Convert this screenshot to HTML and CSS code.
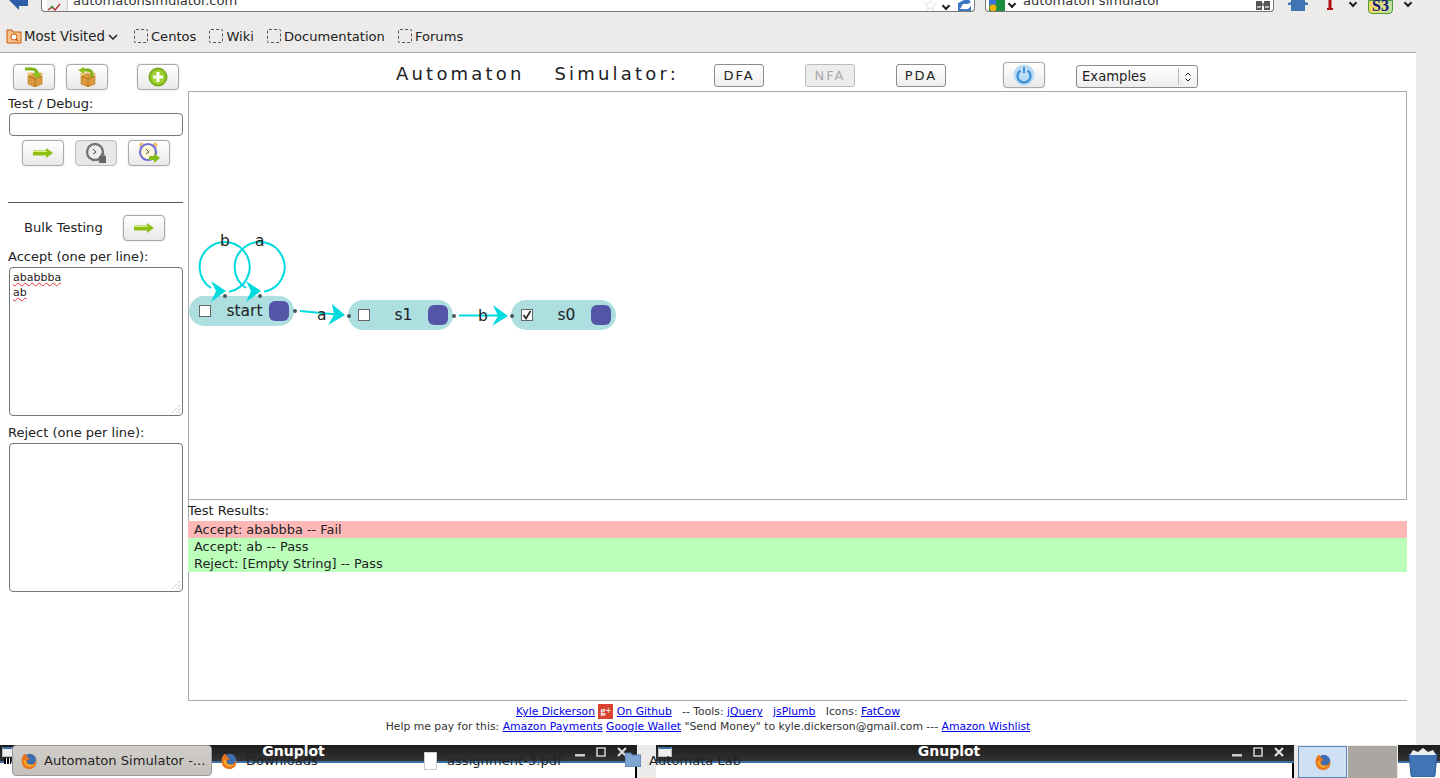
FILE: index.html
```html
<!DOCTYPE html>
<html lang="en">

<head>
    <meta charset="UTF-8">
    <title>Automaton Simulator</title>
    <link rel="stylesheet" href="styles.css">
</head>

<body>
    <svg class="defs" width="0" height="0">
        <symbol id="i-arrow" viewBox="0 0 20 10">
            <path d="M0 2.500h13V0l7 5-7 5V7.500H0z" fill="#8fbf14"/>
            <path d="M0 3.500h14" stroke="#d9ef7c" stroke-width="1"/>
        </symbol>
        <symbol id="i-box" viewBox="0 0 20 20">
            <path d="M4 9l7-3 7 3v8l-7 3-7-3z" fill="#dc9a3e" stroke="#b8791f" stroke-width=".6"/>
            <path d="M4 9l7 3 7-3M11 12v8" fill="none" stroke="#a96c18" stroke-width=".8"/>
            <path d="M4 9L2.500 6.500 7 5l4 1zM18 9l1.500-2.500L15 5l-4 1z" fill="#f4c884"/>
        </symbol>
        <symbol id="i-firefox" viewBox="0 0 20 20">
            <circle cx="11" cy="9" r="7" fill="#3d6db0"/>
            <path d="M5 2C1 6 1 11 3 15c2 4 8 5 11 3 3-1 5-5 4-9-1 3-3 5-6 5-3 0-5-2-4-5l3-1C9 6 7 5 7 3z" fill="#e8761c"/>
            <path d="M4 9c0 4 3 8 8 7 2 0 4-2 5-4-2 2-4 3-6 2-3 0-5-2-5-5z" fill="#f6b02a"/>
        </symbol>
        <symbol id="i-min" viewBox="0 0 10 10"><path d="M0 7h10v2.500H0z" fill="#ccc"/></symbol>
        <symbol id="i-max" viewBox="0 0 10 10"><path d="M1 1h8v8H1z" fill="none" stroke="#ccc" stroke-width="1.600"/></symbol>
        <symbol id="i-close" viewBox="0 0 10 10"><path d="M1 1l8 8M9 1l-8 8" stroke="#ddd" stroke-width="2.200"/></symbol>
        <symbol id="i-grip" viewBox="0 0 11 11"><path d="M10 2l-8 8M10 6l-4 4M10 9l-1 1" stroke="#aaa" stroke-dasharray="1 1"/></symbol>
    </svg>

    <header class="chrome">
        <div class="navbar">
            <svg class="back" width="20" height="11" viewBox="0 0 20 11"><path d="M0 0l10 10V6h9V0z" fill="#2c5fa8"/></svg>
            <div class="urlbox">
                <span class="favicon"><svg width="15" height="9" viewBox="0 0 15 9"><path d="M1 7l4-3 3 3 5-6" fill="none" stroke="#b03030" stroke-width="1.400"/><circle cx="5" cy="4" r="1.300" fill="#2a9a3a"/></svg></span>
                <span class="urltext">automatonsimulator.com</span>
                <span class="urlicons"><span class="star">☆</span><span class="chev"></span><svg class="reload" width="14" height="11" viewBox="0 0 14 11"><path d="M1 3l6-3h5l2 2-3 2H6L3 9h8l3-3v5H1z" fill="#3f78c4"/></svg></span>
            </div>
            <div class="searchbox">
                <svg class="goog" width="16" height="11" viewBox="0 0 16 11"><rect width="16" height="11" fill="#1a8f3c"/><rect width="7" height="5" fill="#3c76d8"/><circle cx="4" cy="8" r="3.400" fill="#f4b400"/></svg>
                <span class="chev"></span>
                <span class="urltext">automaton simulator</span>
                <svg class="binoc" width="16" height="11" viewBox="0 0 16 11"><path d="M1 1h6v9H1zM9 1h6v9H9z" fill="#555"/><path d="M7 3h2v3H7z" fill="#888"/><path d="M2 6h4v2H2zM10 6h4v2h-4z" fill="#bbb"/></svg>
            </div>
            <div class="addons">
                <svg width="20" height="11" viewBox="0 0 20 11"><path d="M3 0h14v2l3 1v2h-3v6H3V5H0V3l3-1z" fill="#3f74b5"/></svg>
                <svg class="addon-t" width="6" height="10" viewBox="0 0 6 10"><path d="M1.500 0h3v8H6v2H0V8h1.500z" fill="#b01010"/></svg>
                <span class="chev"></span>
                <span class="s3">S3</span>
                <span class="chev"></span>
            </div>
        </div>
        <nav class="bookmarks">
            <svg width="16" height="16" viewBox="0 0 16 16"><path d="M1 2h5l1 2h8v11H1z" fill="#f7c08a" stroke="#cc5a0a"/><circle cx="8" cy="9" r="3" fill="#fff" stroke="#cc5a0a"/><path d="M10 11l2 2" stroke="#cc5a0a" stroke-width="1.400"/></svg>
            <span class="bm-most">Most Visited</span>
            <svg class="bm-caret" width="10" height="6" viewBox="0 0 10 6"><path d="M1 1l4 4 4-4" fill="none" stroke="#222" stroke-width="1.500"/></svg>
            <a class="bm"><i></i>Centos</a>
            <a class="bm"><i></i>Wiki</a>
            <a class="bm"><i></i>Documentation</a>
            <a class="bm"><i></i>Forums</a>
        </nav>
    </header>

    <div class="viewport">
        <main class="page">
            <aside class="sidebar">
                <div class="btn-row top-row">
                    <button class="btn">
                        <svg width="20" height="20" viewBox="0 0 20 20"><use href="#i-box"/><path d="M1 2h7q5 0 5 5" fill="none" stroke="#7fb51a" stroke-width="3"/><path d="M8.500 6h9L13 12z" fill="#8fc31f"/></svg>
                    </button>
                    <button class="btn">
                        <svg width="20" height="20" viewBox="0 0 20 20"><use href="#i-box"/><path d="M15 10V7q0-4-5-4H7" fill="none" stroke="#7fb51a" stroke-width="3"/><path d="M7 0v7L1 3z" fill="#8fc31f"/></svg>
                    </button>
                    <button class="btn btn-add">
                        <svg width="20" height="20" viewBox="0 0 20 20"><circle cx="10" cy="10" r="9" fill="#86bc1e" stroke="#6b9c10"/><circle cx="10" cy="10" r="7" fill="#9ed030"/><path d="M8.500 5h3v3.500H15v3h-3.500V15h-3v-3.500H5v-3h3.500z" fill="#fff"/></svg>
                    </button>
                </div>
                <label class="side-label debug-label" for="debug">Test / Debug:</label>
                <input class="debug-input" id="debug" type="text">
                <div class="btn-row debug-row">
                    <button class="btn"><svg width="20" height="10"><use href="#i-arrow"/></svg></button>
                    <button class="btn btn-off">
                        <svg width="22" height="22" viewBox="0 0 22 22"><circle cx="10" cy="10" r="8" fill="#eee" stroke="#777" stroke-width="2.400"/><path d="M8 7l3 3-3 2" fill="none" stroke="#444"/><path d="M14 14h7v7h-7z" fill="#666"/><path d="M16 14v-2h3v2" fill="none" stroke="#666"/></svg>
                    </button>
                    <button class="btn">
                        <svg width="22" height="22" viewBox="0 0 22 22"><circle cx="3.500" cy="3" r="2.500" fill="#f2c274"/><circle cx="17" cy="3" r="2.500" fill="#f2c274"/><circle cx="10" cy="10" r="8" fill="#fff8d8" stroke="#7070d8" stroke-width="2.200"/><path d="M8 7l3 3-3 2" fill="none" stroke="#444"/><path d="M11 14h5v-3l6 5-6 5v-3h-5z" fill="#86bc1e"/></svg>
                    </button>
                </div>
                <hr class="divider">
                <div class="bulk-row">
                    <span class="bulk-text">Bulk Testing</span>
                    <button class="btn"><svg width="20" height="10"><use href="#i-arrow"/></svg></button>
                </div>
                <div class="side-label accept-label">Accept (one per line):</div>
                <div class="bulk-box"><span class="typo">ababbba</span><br><span class="typo">ab</span><svg class="grip" width="11" height="11"><use href="#i-grip"/></svg></div>
                <div class="side-label reject-label">Reject (one per line):</div>
                <div class="bulk-box"><svg class="grip" width="11" height="11"><use href="#i-grip"/></svg></div>
            </aside>

            <section class="content">
                <div class="toolbar">
                    <h1 class="title">Automaton &nbsp; Simulator:</h1>
                    <button class="mode">DFA</button>
                    <button class="mode mode-off">NFA</button>
                    <button class="mode">PDA</button>
                    <button class="btn power">
                        <svg width="22" height="22" viewBox="0 0 22 22"><circle cx="11" cy="11" r="10.500" fill="#bcdcf5"/><path d="M7.500 6.500a6.500 6.500 0 1 0 7 0" fill="none" stroke="#3d93dc" stroke-width="2.400"/><path d="M11 3v6" stroke="#3d93dc" stroke-width="2"/></svg>
                    </button>
                    <div class="select"><span>Examples</span><span class="select-arrows"><svg width="8" height="12" viewBox="0 0 8 12"><path d="M1.500 4.500L4 2l2.500 2.500M1.500 7.500L4 10l2.500-2.500" fill="none" stroke="#222"/></svg></span></div>
                </div>

                <div class="canvas">
                    <div class="state st-start"><i class="check"></i><span class="state-name">start</span><b class="handle"></b></div>
                    <div class="state st-s1"><i class="check"></i><span class="state-name">s1</span><b class="handle"></b></div>
                    <div class="state st-s0"><i class="check"><svg width="10" height="10" viewBox="0 0 10 10"><path d="M1.500 5l2.500 3.500L8.500 1" fill="none" stroke="#222" stroke-width="1.600"/></svg></i><span class="state-name">s0</span><b class="handle"></b></div>
                    <svg class="wires" width="440" height="260" viewBox="189 92 440 260">
                        <g fill="none" stroke="#00dbe0" stroke-width="2">
                            <path d="M229 291.700A25 25 0 1 0 211 288"/>
                            <path d="M264 291.700A25 25 0 1 0 246 288"/>
                            <path d="M300 311l42 4"/>
                            <path d="M459 315.500h46"/>
                        </g>
                        <g fill="#00dbe0">
                            <path d="M211 281l15 10-15 11 5-11z"/>
                            <path d="M246 281l15 10-15 11 5-11z"/>
                            <path d="M332 304l13 11-17 10 6-10z"/>
                            <path d="M493 305l15 11-16 10 6-10z"/>
                        </g>
                        <g fill="#4a5560">
                            <circle cx="225" cy="296" r="2"/>
                            <circle cx="260" cy="296" r="2"/>
                            <circle cx="295" cy="311" r="2"/>
                            <circle cx="349" cy="316" r="2"/>
                            <circle cx="454" cy="316" r="2"/>
                            <circle cx="512" cy="316" r="2"/>
                        </g>
                    </svg>
                    <span class="edge-label lb-b">b</span>
                    <span class="edge-label lb-a">a</span>
                    <span class="edge-label lb-a2">a</span>
                    <span class="edge-label lb-b2">b</span>
                </div>

                <div class="results">
                    <div class="results-label">Test Results:</div>
                    <div class="result fail">Accept: ababbba -- Fail</div>
                    <div class="result pass">Accept: ab -- Pass</div>
                    <div class="result pass">Reject: [Empty String] -- Pass</div>
                </div>

                <footer class="credits">
                    <div><a href="#">Kyle Dickerson</a> <span class="gplus">g+</span> <a href="#">On Github</a> &nbsp; -- Tools: <a href="#">jQuery</a> &nbsp; <a href="#">jsPlumb</a> &nbsp; Icons: <a href="#">FatCow</a></div>
                    <div>Help me pay for this: <a href="#">Amazon Payments</a> <a href="#">Google Wallet</a> "Send Money" to kyle.dickerson@gmail.com --- <a href="#">Amazon Wishlist</a></div>
                </footer>
            </section>
        </main>
        <div class="scroll-strip"></div>
    </div>

    <div class="taskbar">
        <div class="task-active"><svg width="18" height="18"><use href="#i-firefox"/></svg><span>Automaton Simulator -...</span></div>
        <div class="gnuplot gnuplot-a">
            <div class="titlebar">
                <i class="win-icon"></i>
                <span class="win-title">Gnuplot</span>
                <span class="win-btns"><svg width="10" height="10"><use href="#i-min"/></svg><svg width="10" height="10"><use href="#i-max"/></svg><svg width="10" height="10"><use href="#i-close"/></svg></span>
            </div>
            <div class="win-body"></div>
        </div>
        <div class="task-gap"></div>
        <div class="gnuplot gnuplot-b">
            <div class="titlebar">
                <i class="win-icon"></i>
                <span class="win-title">Gnuplot</span>
                <span class="win-btns"><svg width="10" height="10"><use href="#i-min"/></svg><svg width="10" height="10"><use href="#i-max"/></svg><svg width="10" height="10"><use href="#i-close"/></svg></span>
            </div>
            <div class="win-body"></div>
        </div>
        <div class="pager"><span class="pager-on"><svg width="18" height="18"><use href="#i-firefox"/></svg></span><span class="pager-off"></span></div>
        <div class="gnuplot gnuplot-c">
            <div class="titlebar"></div>
        </div>
        <span class="task-item item-dl"><svg width="18" height="18"><use href="#i-firefox"/></svg>Downloads</span>
        <span class="task-item item-pdf"><i class="doc"></i>assignment-3.pdf</span>
        <span class="task-item item-lab"><svg class="lab-folder" width="16" height="15" viewBox="0 0 16 15"><path d="M0 1h6l1 2h9v12H0z" fill="#7fa6d0" stroke="#4a78ac"/></svg>Automata Lab</span>
        <svg class="trash" width="30" height="30" viewBox="0 0 30 30"><path d="M1 7h28l-2 21q0 2-2 2H5q-2 0-2-2z" fill="#3f74b5" stroke="#2d5a96"/><path d="M2 8l3-5 5 2 5-4 5 4 5-2 3 5z" fill="#e8eef4"/></svg>
    </div>
</body>

</html>
```
FILE: styles.css
```css
body {
    margin: 0;
    height: 778px;
    overflow: hidden;
    display: flex;
    flex-direction: column;
    font-family: "DejaVu Sans", sans-serif;
    font-size: 13px;
    color: #222;
    background: #fff;
}

.defs {
    position: absolute;
}

/* browser chrome */
.chrome {
    height: 53px;
    flex: none;
    background: #ecebe9;
}

.navbar {
    height: 19px;
    display: flex;
    align-items: flex-start;
    overflow: hidden;
}

.back {
    margin-left: 9px;
    flex: none;
}

.urlbox,
.searchbox {
    height: 12px;
    box-sizing: border-box;
    background: #fff;
    border: 1px solid #777;
    border-top: 0;
    border-radius: 0 0 4px 4px;
    display: flex;
    align-items: flex-end;
    overflow: hidden;
    flex: none;
}

.urlbox {
    width: 934px;
    margin-left: 12px;
    padding-left: 5px;
}

.favicon {
    width: 20px;
    height: 11px;
    background: #eee;
    border-right: 1px solid #ccc;
    margin-right: 5px;
    flex: none;
}

.urltext {
    font-size: 13.1px;
    line-height: 18px;
    height: 18px;
    color: #333;
    position: relative;
    top: 2px;
    align-self: flex-start;
    margin-top: -10px;
}

.urlicons {
    margin-left: auto;
    display: flex;
    align-items: center;
    padding-right: 3px;
}

.star {
    color: #d4d4d4;
    font-size: 17px;
    line-height: 11px;
    margin-right: 5px;
}

.reload {
    margin-left: 8px;
}

.chev {
    width: 6px;
    height: 6px;
    border-right: 2px solid #222;
    border-bottom: 2px solid #222;
    box-sizing: border-box;
    transform: rotate(45deg);
    display: inline-block;
    flex: none;
}

.searchbox {
    width: 289px;
    margin-left: 10px;
    padding-left: 3px;
}

.searchbox .chev {
    margin: 0 8px 4px 4px;
}

.binoc {
    margin-left: auto;
    margin-right: 2px;
}

.addons {
    display: flex;
    align-items: flex-start;
    margin-left: 14px;
}

.addon-t {
    margin-left: 19px;
}

.addons .chev {
    margin: 0 0 0 17px;
}

.s3 {
    width: 25px;
    height: 14px;
    margin-left: 12px;
    background: linear-gradient(90deg, #f4d860, #bfe0a8);
    border: 1px solid #4a9a3a;
    border-radius: 0 0 4px 4px;
    box-sizing: border-box;
    font: bold 16px/9px "Liberation Serif", serif;
    color: #14147a;
    text-align: center;
}

.addons .s3 + .chev {
    margin-left: 12px;
}

.bookmarks {
    width: 1416px;
    height: 34px;
    box-sizing: border-box;
    border-bottom: 1px solid #a9a9a9;
    display: flex;
    align-items: center;
    padding: 1px 0 0 6px;
    font-size: 13.1px;
    color: #222;
}

.bm-most {
    margin-left: 2px;
    font-size: 13.3px;
}

.bm-caret {
    margin: 2px 0 0 3px;
}

.bm {
    display: flex;
    align-items: center;
    gap: 3px;
    margin-left: 13px;
}

.bm-caret + .bm {
    margin-left: 16px;
}

.bm i {
    width: 12px;
    height: 12px;
    border: 1px dashed #555;
    border-radius: 2px;
    display: block;
}

/* page */
.viewport {
    flex: 1;
    min-height: 0;
    display: flex;
}

.page {
    width: 1416px;
    display: flex;
    align-items: flex-start;
}

.scroll-strip {
    width: 24px;
    background: #ecebe9;
}

.sidebar {
    width: 188px;
    flex: none;
    box-sizing: border-box;
    padding: 11px 5px 0 8px;
    display: flex;
    flex-direction: column;
}

.btn {
    width: 42px;
    height: 26px;
    padding: 0;
    border: 1px solid #aaa;
    border-radius: 4px;
    background: linear-gradient(#fff, #e9e9e9);
    box-shadow: 0 0 1px #888;
    display: flex;
    align-items: center;
    justify-content: center;
}

.btn-off {
    background: #e8e8e8;
    border-color: #bbb;
    box-shadow: none;
}

.btn-row {
    display: flex;
    gap: 11px;
}

.top-row {
    padding-left: 5px;
}

.btn-add {
    margin-left: 18px;
}

.side-label {
    display: block;
    line-height: 16px;
}

.debug-label {
    margin-top: 6px;
}

.debug-input {
    display: block;
    width: 174px;
    height: 23px;
    margin: 1px 0 0 1px;
    box-sizing: border-box;
    border: 1px solid #777;
    border-radius: 4px;
}

.debug-row {
    margin-top: 4px;
    padding-left: 14px;
}

.divider {
    width: 175px;
    margin: 36px 0 0 0;
    border: 0;
    border-top: 1px solid #555;
}

.bulk-row {
    display: flex;
    align-items: center;
    margin-top: 12px;
    padding-left: 16px;
}

.bulk-text {
    font-size: 13.1px;
    margin-bottom: 2px;
}

.bulk-row .btn {
    margin-left: 20px;
}

.accept-label {
    margin-top: 8px;
}

.reject-label {
    margin-top: 9px;
}

.bulk-box {
    position: relative;
    width: 174px;
    height: 149px;
    margin: 2px 0 0 1px;
    box-sizing: border-box;
    border: 1px solid #777;
    border-radius: 4px;
    padding: 2px 3px;
    font-size: 11px;
    line-height: 15px;
}

.typo {
    text-decoration: underline wavy #e03030 1px;
}

.grip {
    position: absolute;
    right: 1px;
    bottom: 1px;
}

.content {
    width: 1219px;
    flex: none;
}

.toolbar {
    height: 38px;
    display: flex;
    align-items: center;
    box-sizing: border-box;
    padding: 6px 0 0 208px;
}

.title {
    margin: -3px 0 0 0;
    font-size: 18px;
    font-weight: normal;
    letter-spacing: 3.2px;
    word-spacing: 1px;
    white-space: nowrap;
    width: 318px;
}

.mode {
    width: 50px;
    height: 23px;
    padding: 0;
    margin-right: 41px;
    font: 13px "DejaVu Sans", sans-serif;
    letter-spacing: 2px;
    color: #222;
    border: 1px solid #8c8c8c;
    border-radius: 3px;
    background: linear-gradient(#fff, #ededed);
}

.mode-off {
    color: #aaa;
    background: #ececec;
    border-color: #bbb;
}

.power {
    margin: 0 31px 0 16px;
}

.select {
    width: 122px;
    height: 23px;
    margin-top: 3px;
    box-sizing: border-box;
    border: 1px solid #8c8c8c;
    border-radius: 3px;
    background: linear-gradient(#fff, #eee);
    display: flex;
    align-items: center;
    justify-content: space-between;
    padding-left: 5px;
    font-size: 13.2px;
}

.select-arrows {
    width: 18px;
    height: 17px;
    border-left: 1px solid #bbb;
    display: flex;
    align-items: center;
    justify-content: center;
}

.canvas {
    position: relative;
    height: 409px;
    box-sizing: border-box;
    border: 1px solid #aaa;
}

.wires {
    position: absolute;
    left: 0;
    top: 0;
}

.state {
    position: absolute;
    width: 105px;
    height: 30px;
    box-sizing: border-box;
    background: #addfe0;
    border-radius: 15px;
    display: flex;
    align-items: center;
    padding: 0 5px 0 10px;
}

.st-start {
    left: 0;
    top: 204px;
}

.st-s1 {
    left: 159px;
    top: 208px;
}

.st-s0 {
    left: 322px;
    top: 208px;
}

.check {
    width: 12px;
    height: 12px;
    box-sizing: border-box;
    background: #fff;
    border: 1px solid #666;
    display: flex;
    flex: none;
}

.state-name {
    flex: 1;
    text-align: center;
    padding-left: 9px;
    font-size: 15.5px;
}

.handle {
    width: 20px;
    height: 20px;
    border-radius: 6px;
    background: #5555a8;
    flex: none;
}

.edge-label {
    position: absolute;
    font-size: 15.5px;
    line-height: 18px;
}

.lb-b {
    left: 31px;
    top: 140px;
}

.lb-a {
    left: 66px;
    top: 140px;
}

.lb-a2 {
    left: 128px;
    top: 214px;
}

.lb-b2 {
    left: 289px;
    top: 215px;
}

.results {
    height: 201px;
    box-sizing: border-box;
    border-left: 1px solid #aaa;
    border-bottom: 1px solid #aaa;
}

.results-label {
    margin-left: -1px;
    padding-top: 1px;
    line-height: 20px;
}

.result {
    margin-left: -1px;
    padding-left: 6px;
    line-height: 17px;
    font-size: 12.9px;
}

.fail {
    background: #ffb8b8;
}

.pass {
    background: #bbffbb;
}

.credits {
    width: 1416px;
    margin-left: -188px;
    padding-top: 3px;
    text-align: center;
    font-size: 10.8px;
    line-height: 15px;
    color: #333;
}

.credits a {
    color: #0000ee;
}

.gplus {
    display: inline-block;
    width: 15px;
    height: 15px;
    background: #d9422f;
    color: #fff;
    font: bold 10px/14px "Liberation Serif", serif;
    vertical-align: top;
}

/* desktop panel */
.taskbar {
    height: 33px;
    flex: none;
    display: flex;
    background: #ecebe9;
    position: relative;
    font-size: 13.1px;
}

.task-active {
    position: absolute;
    left: 12px;
    top: 0;
    width: 200px;
    height: 31px;
    box-sizing: border-box;
    background: linear-gradient(#d2cfca, #c4c1bc);
    border: 1px solid #999;
    border-radius: 4px;
    display: flex;
    align-items: center;
    gap: 6px;
    padding-left: 7px;
    white-space: nowrap;
    z-index: 1;
}

.gnuplot {
    background: #fff;
    flex: none;
    display: flex;
    flex-direction: column;
}

.gnuplot-a {
    width: 637px;
}

.gnuplot-b {
    width: 638px;
}

.gnuplot-c {
    flex: 1;
}

.task-gap {
    width: 19px;
    flex: none;
}

.titlebar {
    height: 18px;
    flex: none;
    box-sizing: border-box;
    background: linear-gradient(#1c1c1c, #333);
    border-bottom: 2px solid #3a6ea5;
    position: relative;
    text-align: center;
    color: #fff;
    font-weight: bold;
    font-size: 14px;
    line-height: 12px;
}

.win-body {
    flex: 1;
    border-right: 2px solid #000;
}

.win-title {
    position: relative;
    left: -25px;
}

.gnuplot-b .win-title {
    left: -26px;
}

.win-icon {
    position: absolute;
    left: 2px;
    top: 2px;
    width: 14px;
    height: 10px;
    box-sizing: border-box;
    background: #eee;
    border: 1px solid #bbb;
    border-top: 2px solid #3a6ea5;
}

/* small black tray mark under the hidden window icon */
.gnuplot-a .win-icon::after {
    content: "";
    position: absolute;
    left: 1px;
    top: 9px;
    width: 7px;
    height: 6px;
    background: repeating-linear-gradient(90deg, #000 0 2px, #fff 2px 3px);
}

.win-btns {
    position: absolute;
    right: 10px;
    top: 2px;
    display: flex;
    gap: 11px;
}

.task-item {
    position: absolute;
    top: 7px;
    height: 18px;
    display: flex;
    align-items: center;
    gap: 8px;
    line-height: 18px;
    white-space: nowrap;
    color: #222;
}

.item-dl {
    left: 220px;
}

.item-pdf {
    left: 424px;
    gap: 10px;
}

.item-lab {
    left: 625px;
    gap: 8px;
}

.lab-folder {
    margin-top: -3px;
}

.doc {
    width: 13px;
    height: 18px;
    background: #fff;
    border: 1px solid #ccc;
    box-sizing: border-box;
}

.pager {
    display: flex;
    flex: none;
    width: 104px;
    box-sizing: border-box;
    padding: 1px 1px 0 4px;
    gap: 1px;
}

.pager-on,
.pager-off {
    width: 49px;
    height: 32px;
    display: flex;
    align-items: center;
    justify-content: center;
    box-sizing: border-box;
}

.pager-on {
    background: #cfe0f5;
    border: 1px solid #5a85b5;
}

.pager-off {
    background: #aaa6a2;
}

.trash {
    position: absolute;
    right: 2px;
    top: 2px;
}
```
